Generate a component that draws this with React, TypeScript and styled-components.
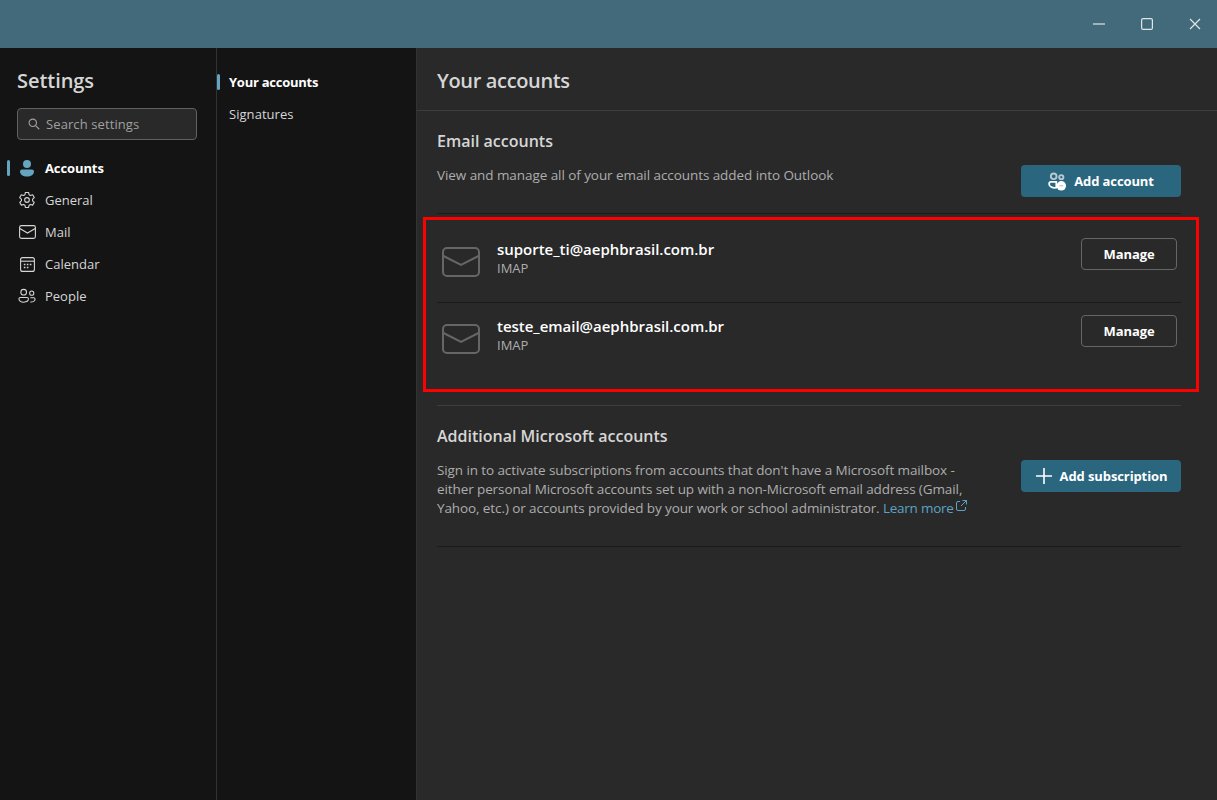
import styled, { createGlobalStyle } from 'styled-components';
import type { ReactNode } from 'react';

const GlobalStyle = createGlobalStyle`
  html, body {
    margin: 0;
    padding: 0;
    height: 100%;
    background: #292929;
    overflow: hidden;
  }
  * {
    box-sizing: border-box;
  }
  body {
    font-family: "Open Sans", "Noto Sans", "Liberation Sans", sans-serif;
    color: #d6d6d6;
  }
`;

const Window = styled.div`
  width: 1217px;
  height: 800px;
  display: flex;
  flex-direction: column;
`;

const TitleBar = styled.header`
  height: 48px;
  flex: none;
  background: #436a7b;
  display: flex;
  justify-content: flex-end;
  align-items: center;
`;

const WinButton = styled.div`
  width: 48px;
  height: 48px;
  padding-left: 4px;
  display: flex;
  align-items: center;
  justify-content: center;
  color: #dfe6e9;
`;

const Body = styled.div`
  flex: 1;
  display: flex;
  min-height: 0;
`;

const Sidebar = styled.aside`
  width: 217px;
  flex: none;
  background: #141414;
  border-right: 1px solid #333333;
  padding: 19px 19px 0 0;
`;

const SidebarTitle = styled.h1`
  margin: 0 0 14px 17px;
  font-size: 20px;
  line-height: 27px;
  font-weight: 600;
  letter-spacing: -0.05px;
  color: #d6d6d6;
`;

const SearchBox = styled.div`
  margin-left: 17px;
  height: 32px;
  background: #292929;
  border: 1px solid #616161;
  border-radius: 4px;
  display: flex;
  align-items: center;
  gap: 6px;
  padding-left: 10px;
  font-size: 13px;
  letter-spacing: 0.1px;
  color: #a0a0a0;
`;

const NavList = styled.nav`
  margin-top: 12px;
  display: flex;
  flex-direction: column;
`;

const NavRow = styled.div<{ $active?: boolean }>`
  position: relative;
  height: 32px;
  display: flex;
  align-items: center;
  gap: 8px;
  padding-left: 17px;
  font-size: 13px;
  letter-spacing: ${(p) => (p.$active ? '-0.1px' : '0')};
  font-weight: ${(p) => (p.$active ? 700 : 400)};
  color: ${(p) => (p.$active ? '#ffffff' : '#d6d6d6')};
`;

const ActiveBar = styled.span`
  position: absolute;
  left: 7px;
  top: 8px;
  width: 3px;
  height: 16px;
  border-radius: 2px;
  background: #64a5c0;
`;

const NavIcon = styled.span`
  width: 20px;
  height: 20px;
  display: flex;
  align-items: center;
  justify-content: center;
  flex: none;
`;

const SubNav = styled.aside`
  width: 200px;
  flex: none;
  background: #141414;
  border-right: 1px solid #333333;
  padding-top: 18px;
`;

const SubRow = styled.div<{ $active?: boolean }>`
  position: relative;
  height: 32px;
  display: flex;
  align-items: center;
  padding-left: 12px;
  font-size: 13px;
  letter-spacing: ${(p) => (p.$active ? '-0.25px' : '0.05px')};
  font-weight: ${(p) => (p.$active ? 700 : 400)};
  color: ${(p) => (p.$active ? '#ffffff' : '#d6d6d6')};
`;

const SubBar = styled.span`
  position: absolute;
  left: 0;
  top: 8px;
  width: 3px;
  height: 16px;
  border-radius: 2px;
  background: #64a5c0;
`;

const Main = styled.main`
  flex: 1;
  background: #292929;
  min-width: 0;
`;

const MainHeader = styled.div`
  height: 63px;
  border-bottom: 1px solid #3d3d3d;
  padding: 19px 0 0 20px;
  font-size: 20px;
  line-height: 27px;
  font-weight: 600;
  letter-spacing: -0.35px;
  color: #d6d6d6;
`;

const Content = styled.div`
  width: 744px;
  margin-left: 20px;
`;

const Section = styled.section`
  display: flex;
  justify-content: space-between;
  align-items: flex-start;
`;

const SectionTitle = styled.h2`
  margin: 0;
  font-size: 16px;
  line-height: 22px;
  font-weight: 600;
  letter-spacing: 0;
  color: #d6d6d6;
`;

const Description = styled.p`
  margin: 0;
  font-size: 13.5px;
  line-height: 19px;
  letter-spacing: -0.07px;
  color: #adadad;
`;

const EmailHead = styled.div`
  height: 103px;
  padding-top: 19px;
  border-bottom: 1px solid #1a1a1a;
`;

const EmailDescRow = styled(Section)`
  margin-top: 14px;
`;

const EmailButtonSlot = styled.div`
  margin-top: -1px;
`;

const PrimaryButton = styled.button`
  width: 160px;
  height: 32px;
  flex: none;
  border: none;
  border-radius: 4px;
  background: #2b667f;
  color: #ffffff;
  font: inherit;
  font-size: 13px;
  font-weight: 700;
  letter-spacing: -0.1px;
  display: flex;
  align-items: center;
  justify-content: center;
  gap: 7px;
  padding: 0;
`;

const AccountList = styled.div`
  position: relative;
`;

const AccountRow = styled.div<{ $last?: boolean }>`
  height: ${(p) => (p.$last ? 103 : 89)}px;
  display: flex;
  align-items: flex-start;
  padding: ${(p) => (p.$last ? 12 : 24)}px 4px 0 5px;
  border-bottom: 1px solid ${(p) => (p.$last ? '#3d3d3d' : '#1a1a1a')};
`;

const AccountIcon = styled.span`
  width: 38px;
  height: 30px;
  margin-top: 9px;
  flex: none;
  color: #666666;
`;

const AccountText = styled.div`
  flex: 1;
  margin: 1px 0 0 17px;
`;

const AccountEmail = styled.div`
  font-size: 15px;
  line-height: 20px;
  font-weight: 600;
  letter-spacing: -0.02px;
  color: #ffffff;
`;

const AccountType = styled.div`
  font-size: 13px;
  line-height: 19px;
  color: #adadad;
`;

const ManageButton = styled.button`
  width: 96px;
  height: 32px;
  flex: none;
  background: transparent;
  border: 1px solid #666666;
  border-radius: 4px;
  color: #ffffff;
  font: inherit;
  font-size: 13px;
  font-weight: 700;
  letter-spacing: -0.1px;
`;

const Highlight = styled.div`
  position: absolute;
  left: -14px;
  top: 3px;
  width: 776px;
  height: 175px;
  border: 3px solid #ff0000;
  pointer-events: none;
`;

const AdditionalBlock = styled.div`
  height: 141px;
  border-bottom: 1px solid #1a1a1a;
  padding-top: 19px;
`;

const AdditionalRow = styled(Section)`
  margin-top: 13px;
`;

const AdditionalText = styled(Description)`
  width: 535px;
  margin-top: 1px;
  letter-spacing: -0.1px;
`;

const LearnGroup = styled.span`
  white-space: nowrap;
`;

const LearnLink = styled.a`
  color: #5ba3c4;
  text-decoration: none;
  letter-spacing: -0.25px;
`;

const ExternalIcon = styled.svg`
  margin-left: 2px;
  vertical-align: 2px;
`;

function SmallMailIcon() {
  return (
    <svg width="17" height="14" viewBox="0 0 17 14" fill="none" stroke="currentColor" strokeWidth="1.1">
      <rect x="0.6" y="0.6" width="15.8" height="12.8" rx="1.8" />
      <path d="M0.8 3.6 8.5 8l7.7-4.4" />
    </svg>
  );
}

function LargeMailIcon() {
  return (
    <svg width="38" height="30" viewBox="0 0 38 30" fill="none" stroke="currentColor" strokeWidth="2">
      <rect x="1" y="1" width="36" height="28" rx="4" />
      <path d="M1.5 9 19 18l17.5-9" />
    </svg>
  );
}

function PersonIcon() {
  return (
    <svg width="18" height="18" viewBox="0 0 18 18" fill="#64a5c0">
      <circle cx="9" cy="5" r="4" />
      <path d="M2 12.5A2 2 0 0 1 4 10.5h10a2 2 0 0 1 2 2c0 3-3 5-7 5s-7-2-7-5Z" />
    </svg>
  );
}

function GearIcon() {
  return (
    <svg width="18" height="18" viewBox="0 0 20 20" fill="none" stroke="currentColor" strokeWidth="1.2" strokeLinejoin="round">
      <circle cx="10" cy="10" r="2.6" />
      <path d="M8.2 1.6h3.6l.5 2.5 1.6.9 2.4-.8 1.8 3.1-1.9 1.7v1.9l1.9 1.7-1.8 3.1-2.4-.8-1.6.9-.5 2.5H8.2l-.5-2.5-1.6-.9-2.4.8-1.8-3.1 1.9-1.7V9l-1.9-1.7 1.8-3.1 2.4.8 1.6-.9.5-2.5Z" />
    </svg>
  );
}

function CalendarIcon() {
  return (
    <svg width="15" height="15" viewBox="0 0 15 15" fill="none" stroke="currentColor" strokeWidth="1.1">
      <rect x="0.6" y="0.6" width="13.8" height="13.8" rx="2" />
      <path d="M0.6 4.2h13.8" />
      <path d="M3.8 7.5h1.6M6.8 7.5h1.6M9.8 7.5h1.6M3.8 10.5h1.6M6.8 10.5h1.6" strokeWidth="1.5" />
    </svg>
  );
}

function PeopleIcon() {
  return (
    <svg width="18" height="16" viewBox="0 0 19 16" fill="none" stroke="currentColor" strokeWidth="1.1">
      <circle cx="6" cy="4" r="3" />
      <circle cx="14.5" cy="5" r="2.2" />
      <path d="M1 11a1.5 1.5 0 0 1 1.5-1.5h7A1.5 1.5 0 0 1 11 11c0 2.4-2.2 3.5-5 3.5S1 13.4 1 11Z" />
      <path d="M13 14.3c2.8.2 5-.8 5-3a1.5 1.5 0 0 0-1.5-1.5H13" />
    </svg>
  );
}

function SearchIcon() {
  return (
    <svg width="12" height="12" viewBox="0 0 13 13" fill="none" stroke="#a0a0a0" strokeWidth="1.2">
      <circle cx="5.2" cy="5.2" r="4" />
      <path d="m8.2 8.2 4 4" />
    </svg>
  );
}

function AddPeopleIcon() {
  return (
    <svg width="19" height="19" viewBox="0 0 20 20" fill="none">
      <circle cx="6" cy="4.5" r="3" stroke="#b9c9d0" strokeWidth="2" />
      <circle cx="14" cy="5.5" r="2.2" stroke="#b9c9d0" strokeWidth="2" />
      <path d="M1.2 12.5c0-1.2.8-2 2-2h5.5v6c-4 .6-7.5-1-7.5-4Z" stroke="#ffffff" strokeWidth="1.8" />
      <circle cx="14" cy="14.5" r="5" fill="#ffffff" />
      <path d="M12 14.5h4" stroke="#9fb6c0" strokeWidth="1" />
    </svg>
  );
}

function PlusIcon() {
  return (
    <svg width="18" height="18" viewBox="0 0 18 18" stroke="#ffffff" strokeWidth="1.6">
      <path d="M9 1v16M1 9h16" />
    </svg>
  );
}

function NavItem({ icon, label, active }: { icon: ReactNode; label: string; active?: boolean }) {
  return (
    <NavRow $active={active}>
      {active && <ActiveBar />}
      <NavIcon>{icon}</NavIcon>
      {label}
    </NavRow>
  );
}

function Account({ email, last }: { email: string; last?: boolean }) {
  return (
    <AccountRow $last={last}>
      <AccountIcon>
        <LargeMailIcon />
      </AccountIcon>
      <AccountText>
        <AccountEmail>{email}</AccountEmail>
        <AccountType>IMAP</AccountType>
      </AccountText>
      <ManageButton>Manage</ManageButton>
    </AccountRow>
  );
}

export default function App() {
  return (
    <Window>
      <GlobalStyle />
      <TitleBar>
        <WinButton>
          <svg width="12" height="12" viewBox="0 0 12 12" stroke="currentColor" strokeWidth="1.2">
            <path d="M0 6h12" />
          </svg>
        </WinButton>
        <WinButton>
          <svg width="12" height="12" viewBox="0 0 12 12" fill="none" stroke="currentColor" strokeWidth="1.2">
            <rect x="0.6" y="0.6" width="10.8" height="10.8" rx="1.5" />
          </svg>
        </WinButton>
        <WinButton>
          <svg width="12" height="12" viewBox="0 0 12 12" stroke="currentColor" strokeWidth="1.2">
            <path d="m1 1 10 10M11 1 1 11" />
          </svg>
        </WinButton>
      </TitleBar>
      <Body>
        <Sidebar>
          <SidebarTitle>Settings</SidebarTitle>
          <SearchBox>
            <SearchIcon />
            Search settings
          </SearchBox>
          <NavList>
            <NavItem icon={<PersonIcon />} label="Accounts" active />
            <NavItem icon={<GearIcon />} label="General" />
            <NavItem icon={<SmallMailIcon />} label="Mail" />
            <NavItem icon={<CalendarIcon />} label="Calendar" />
            <NavItem icon={<PeopleIcon />} label="People" />
          </NavList>
        </Sidebar>
        <SubNav>
          <SubRow $active>
            <SubBar />
            Your accounts
          </SubRow>
          <SubRow>Signatures</SubRow>
        </SubNav>
        <Main>
          <MainHeader>Your accounts</MainHeader>
          <Content>
            <EmailHead>
              <SectionTitle>Email accounts</SectionTitle>
              <EmailDescRow>
                <Description>View and manage all of your email accounts added into Outlook</Description>
                <EmailButtonSlot>
                  <PrimaryButton>
                    <AddPeopleIcon />
                    Add account
                  </PrimaryButton>
                </EmailButtonSlot>
              </EmailDescRow>
            </EmailHead>
            <AccountList>
              <Account email="suporte_ti@aephbrasil.com.br" />
              <Account email="teste_email@aephbrasil.com.br" last />
              <Highlight />
            </AccountList>
            <AdditionalBlock>
              <SectionTitle>Additional Microsoft accounts</SectionTitle>
              <AdditionalRow>
                <AdditionalText>
                  Sign in to activate subscriptions from accounts that don't have a Microsoft mailbox - either personal
                  Microsoft accounts set up with a non-Microsoft email address (Gmail, Yahoo, etc.) or accounts provided
                  by your work or school administrator.{' '}
                  <LearnGroup>
                    <LearnLink>Learn more</LearnLink>
                    <ExternalIcon width="11" height="11" viewBox="0 0 11 11" fill="none" stroke="#5ba3c4" strokeWidth="1">
                      <path d="M4 1.5H2A1.5 1.5 0 0 0 .5 3v6A1.5 1.5 0 0 0 2 10.5h6A1.5 1.5 0 0 0 9.5 9V7M6.5.5h4v4M10.5.5 5 6" />
                    </ExternalIcon>
                  </LearnGroup>
                </AdditionalText>
                <PrimaryButton>
                  <PlusIcon />
                  Add subscription
                </PrimaryButton>
              </AdditionalRow>
            </AdditionalBlock>
          </Content>
        </Main>
      </Body>
    </Window>
  );
}
